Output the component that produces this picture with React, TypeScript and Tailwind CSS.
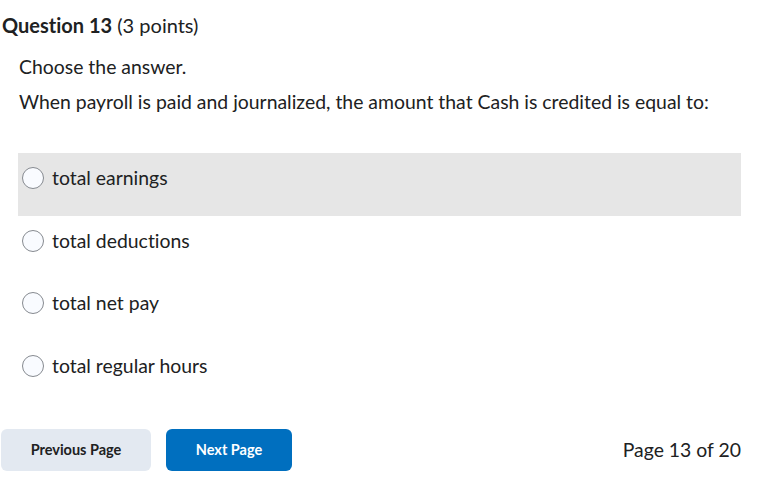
import React from "react";

const options = ["total earnings", "total deductions", "total net pay", "total regular hours"];

export default function App() {
  return (
    <div className="w-[776px] h-[485px] bg-white text-[#202122] overflow-hidden [font-variant-ligatures:none]" style={{ fontFamily: "Lato, 'Noto Sans', sans-serif" }}>
      <div className="pt-[12px] pl-[2px]">
        <h2 className="text-[20px] leading-[26px]">
          <span className="font-bold">Question 13</span> <span className="font-normal">(3 points)</span>
        </h2>
      </div>
      <div className="pl-[19px] pr-[20px]">
        <p className="mt-[17px] text-[19.4px] leading-[24px]">Choose the answer.</p>
        <p className="mt-[11px] text-[19.4px] leading-[24px] whitespace-nowrap">When payroll is paid and journalized, the amount that Cash is credited is equal to:</p>
      </div>
      <div className="mt-[39px] ml-[18px] w-[723px] flex flex-col">
        {options.map((o, i) => (
          <div key={o} className={`${i === 0 ? "h-[63px] bg-[#e6e6e6]" : "h-[62.5px]"} flex items-start pl-[4px] pt-[12.5px]`}>
            <div className="h-[24px] flex items-center">
              <span className="w-[22px] h-[22px] rounded-full border border-[#868a90] bg-[#f9fbff] shrink-0"></span>
              <span className="ml-[8px] text-[19.4px] leading-[24px]">{o}</span>
            </div>
          </div>
        ))}
      </div>
      <div className="mt-[25px] flex items-center pl-[1px] pr-[35px]">
        <button className="w-[150px] h-[42px] rounded-[6px] bg-[#e3e9f1] text-[14.5px] font-bold text-[#202122]">Previous Page</button>
        <button className="ml-[15px] w-[126px] h-[42px] rounded-[6px] bg-[#006fbf] text-[14.5px] font-bold text-white">Next Page</button>
        <span className="ml-auto text-[19.4px]">Page 13 of 20</span>
      </div>
    </div>
  );
}
